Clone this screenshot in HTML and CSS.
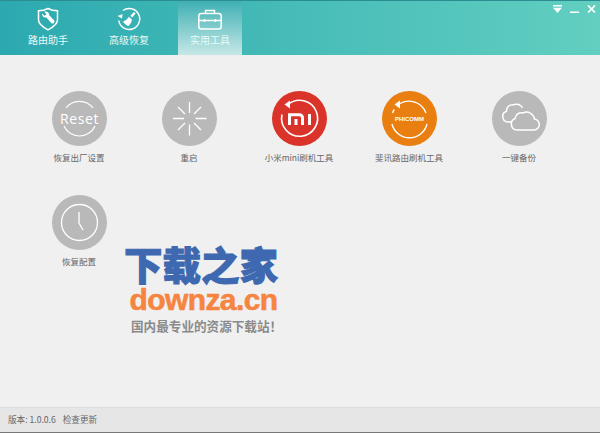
FILE: index.html
```html
<!DOCTYPE html>
<html lang="zh-CN">

<head>
    <meta charset="UTF-8">
    <title>路由助手</title>
    <link rel="stylesheet" href="styles.css">
</head>

<body>
    <div class="window">
        <header class="topbar">
            <nav class="tabs">
                <div class="tab">
                    <svg class="tab-icon" viewBox="0 0 24 24" fill="none" stroke="#fff" stroke-width="1.500">
                        <path d="M12 1.500c3 1.700 6 2.300 9.500 2.300v9c0 4.500-4.500 7.500-9.500 10-5-2.500-9.500-5.500-9.500-10v-9c3.500 0 6.500-.6 9.500-2.300z" />
                        <path d="M6 6.500l2.700 2.200 1.800-1.500-2.200-2.400c2.500-.8 5 .8 5 3.400l4.700 5c1 1 .6 2-.2 2.700-.8.700-1.800.9-2.600 0l-4.700-5.300c-2.600.2-4.900-1.800-4.500-4.100z" fill="#fff" stroke="none" />
                    </svg>
                    <span>路由助手</span>
                </div>
                <div class="tab">
                    <svg class="tab-icon" viewBox="0 0 24 24" fill="none" stroke="#fff" stroke-width="1.500">
                        <path d="M6 3.500a10.500 10.500 0 1 1-4.200 10" />
                        <path d="M.5 9l4.500 2.500.6-4.500z" fill="#fff" stroke="none" />
                        <path d="M17 5l1.600 1.600-3.400 4-1.900-1.900z" fill="#fff" stroke="none" />
                        <path d="M12 9.800l3 3c-.4 2.500-1.800 5-3.500 6.200-2-.4-4.500-2.500-5.500-4.500 2.500-.6 4.500-2.500 6-4.700z" fill="#fff" stroke="none" />
                    </svg>
                    <span>高级恢复</span>
                </div>
                <div class="tab tab-active">
                    <svg class="tab-icon" viewBox="0 0 24 24" fill="none" stroke="#fff" stroke-width="1.500">
                        <rect x=".8" y="6.500" width="22.400" height="15.500" rx="2.500" />
                        <path d="M7.500 6.500V3.500h9v3M.8 13.500h22.400M6.500 12v3M17.500 12v3" />
                    </svg>
                    <span>实用工具</span>
                </div>
            </nav>
            <div class="win-controls">
                <svg width="9" height="8" viewBox="0 0 9 8" fill="#fff">
                    <path d="M0 0h9v1.400H0zM0 2.800h9L4.500 8z" />
                </svg>
                <svg width="9" height="8" viewBox="0 0 9 8" fill="#fff">
                    <path d="M0 6.500h9V8H0z" />
                </svg>
                <svg width="9" height="8" viewBox="0 0 9 8" stroke="#fff" stroke-width="1.700">
                    <path d="M1 .5l7 7M8 .5l-7 7" />
                </svg>
            </div>
        </header>

        <main class="tools">
            <div class="tool">
                <div class="tool-icon gray">
                    <svg viewBox="0 0 55 55" fill="none" stroke="#fff" stroke-width="1.200">
                        <path d="M14 17a17 17 0 0 1 27 0M12 35a17 17 0 0 0 31 0" />
                        <text class="reset-label" x="27.500" y="32.500" text-anchor="middle">Reset</text>
                    </svg>
                </div>
                <span class="tool-name">恢复出厂设置</span>
            </div>
            <div class="tool">
                <div class="tool-icon gray">
                    <svg viewBox="0 0 55 55" fill="none" stroke="#fff" stroke-width="1.300">
                        <path d="M27.500 11v11M27.500 33.500v11M11 27.500h11M33.500 27.500h11M16 16l7 7M32 32l7 7M39 16l-7 7M23 32l-7 7" />
                    </svg>
                </div>
                <span class="tool-name">重启</span>
            </div>
            <div class="tool">
                <div class="tool-icon red">
                    <svg viewBox="0 0 55 55" fill="none" stroke="#fff" stroke-width="1.600">
                        <path d="M16 13.500a18 18 0 1 1-6 10" />
                        <path d="M12.500 13.500l5.500-4v8z" fill="#fff" stroke="none" />
                        <path d="M17.500 34V23.700h10a3 3 0 0 1 3 3V34M24 28v6M37.500 23v11" stroke-width="3" />
                    </svg>
                </div>
                <span class="tool-name">小米mini刷机工具</span>
            </div>
            <div class="tool">
                <div class="tool-icon orange">
                    <svg viewBox="0 0 55 55" fill="none" stroke="#fff" stroke-width="1.400">
                        <path d="M16 14a18 18 0 0 1 28 8M45 33a18 18 0 0 1-35 0M10.500 22c.4-1.300 1-2.500 1.800-3.500" />
                        <path d="M12.500 13.500l5.500-4v8z" fill="#fff" stroke="none" />
                        <text class="phicomm-label" x="27.500" y="29.500" text-anchor="middle">PHICOMM</text>
                    </svg>
                </div>
                <span class="tool-name">斐讯路由刷机工具</span>
            </div>
            <div class="tool">
                <div class="tool-icon gray">
                    <svg viewBox="0 0 55 55" fill="none" stroke="#fff" stroke-width="1.500">
                        <path d="M20 31h-4a5.500 5.500 0 0 1-1.500-10.700 6 6 0 0 1 7-6.500 7 7 0 0 1 9 3" />
                        <path d="M25 39a6 6 0 0 1-2-11.500 6.500 6.500 0 0 1 8-5.500 8 8 0 0 1 11.500 6 5.500 5.500 0 0 1-1.500 11z" fill="#b9b9b9" />
                    </svg>
                </div>
                <span class="tool-name">一键备份</span>
            </div>
            <div class="tool">
                <div class="tool-icon gray">
                    <svg viewBox="0 0 55 55" fill="none" stroke="#fff" stroke-width="1.300">
                        <circle cx="27.500" cy="27.500" r="18" />
                        <path d="M27 17v11l4 7" />
                    </svg>
                </div>
                <span class="tool-name">恢复配置</span>
            </div>
        </main>

        <footer class="statusbar">
            <span>版本: 1.0.0.6</span>
            <span>检查更新</span>
        </footer>

        <div class="watermark">
            <div class="wm-title">下载之家</div>
            <div class="wm-site">downza.cn</div>
            <div class="wm-slogan">国内最专业的资源下载站！</div>
        </div>
    </div>
</body>

</html>
```

FILE: styles.css
```css
* {
    box-sizing: border-box;
}

html,
body {
    margin: 0;
    padding: 0;
}

body {
    font-family: "Noto Sans CJK SC", "Liberation Sans", sans-serif;
    background: #f0f0f0;
}

.window {
    position: relative;
    display: flex;
    flex-direction: column;
    width: 600px;
    height: 433px;
    overflow: hidden;
    background: #f0f0f0;
}

.topbar {
    display: flex;
    justify-content: space-between;
    height: 55px;
    background: linear-gradient(to right, #2ca9b0, #62cfc0);
    border-top: 1px solid #2b8d92;
}

.tabs {
    display: flex;
    gap: 17px;
    padding-left: 16px;
}

.tab {
    display: flex;
    flex-direction: column;
    align-items: center;
    width: 64px;
    padding-top: 6px;
    font-size: 10px;
    line-height: 14px;
    color: #eaf8f7;
}

.tab-icon {
    width: 24px;
    height: 24px;
    margin-bottom: 2px;
}

.tab-active {
    background: linear-gradient(to bottom, #3fb0b4, #c6e8e6);
}

.win-controls {
    display: flex;
    gap: 8px;
    padding: 4px 4px 0 0;
}

.tools {
    flex: 1;
    display: grid;
    grid-template-columns: repeat(5, 110px);
    grid-auto-rows: 104px;
    padding: 36px 0 0 24px;
}

.tool {
    display: flex;
    flex-direction: column;
    align-items: center;
    gap: 4px;
}

.tool-icon {
    width: 55px;
    height: 55px;
    border-radius: 50%;
}

.tool-icon svg {
    display: block;
    width: 55px;
    height: 55px;
}

.gray {
    background: #b9b9b9;
}

.red {
    background: #d9332a;
}

.orange {
    background: #e87f10;
}

.reset-label {
    font-family: "Open Sans", sans-serif;
    font-size: 14px;
    letter-spacing: .6px;
    fill: #fff;
    stroke: none;
}

.phicomm-label {
    font-family: "Liberation Sans", sans-serif;
    font-size: 6px;
    font-weight: bold;
    fill: #fff;
    stroke: none;
}

.tool-name {
    font-size: 8.500px;
    line-height: 14px;
    color: #666;
    white-space: nowrap;
}

.statusbar {
    display: flex;
    gap: 7px;
    align-items: center;
    height: 26px;
    padding: 0 0 3px 8px;
    font-size: 8.600px;
    color: #666;
    background: #e6e6e6;
    border-top: 1px solid #dcdcdc;
    border-bottom: 1px solid #777;
}

/* site stamp over the page */
.watermark {
    position: absolute;
    left: 122px;
    top: 241px;
    width: 158px;
    text-align: center;
}

.wm-title {
    font-size: 38.500px;
    line-height: 44px;
    font-weight: 900;
    white-space: nowrap;
    color: #3e68b0;
    -webkit-text-stroke: 1px #3e68b0;
}

.wm-site {
    padding-left: 5px;
    font-family: "Liberation Sans", sans-serif;
    font-size: 30px;
    line-height: 30px;
    letter-spacing: -.6px;
    font-weight: bold;
    color: #f58540;
    -webkit-text-stroke: .6px #f58540;
    white-space: nowrap;
}

.wm-slogan {
    margin-top: 3px;
    padding-left: 9px;
    font-size: 12.600px;
    line-height: 16px;
    font-weight: bold;
    color: #8a8a8a;
    white-space: nowrap;
}
```
